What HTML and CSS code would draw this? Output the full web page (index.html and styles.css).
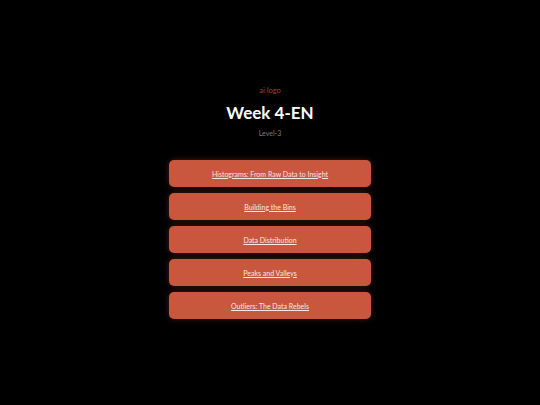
FILE: index.html
```
<!DOCTYPE html>
<html>
<head>
<meta charset="utf-8">
<link rel="stylesheet" href="styles.css">
</head>
<body>
<main class="page">
  <div class="logo">ai logo</div>
  <h1 class="title">Week 4-EN</h1>
  <div class="level">Level-3</div>
  <nav class="list">
    <a class="item" href="#">Histograms: From Raw Data to Insight</a>
    <a class="item" href="#">Building the Bins</a>
    <a class="item" href="#">Data Distribution</a>
    <a class="item" href="#">Peaks and Valleys</a>
    <a class="item" href="#">Outliers: The Data Rebels</a>
  </nav>
</main>
</body>
</html>
```
FILE: styles.css
```
html, body {
  margin: 0;
  padding: 0;
  background: #000;
  height: 100%;
}
body {
  font-family: Lato, "Noto Sans", sans-serif;
}
.page {
  display: flex;
  flex-direction: column;
  align-items: center;
  padding-top: 86px;
}
.logo {
  font-size: 7.5px;
  line-height: 10px;
  color: #a4452e;
}
.title {
  margin: 7px 0 0;
  font-size: 17px;
  line-height: 20px;
  font-weight: 700;
  color: #fff;
}
.level {
  margin-top: 5px;
  font-size: 7px;
  line-height: 10px;
  color: #7a7a7a;
}
.list {
  margin-top: 22px;
  display: flex;
  flex-direction: column;
  gap: 6px;
  width: 202px;
}
.item {
  display: flex;
  align-items: center;
  justify-content: center;
  height: 27px;
  border-radius: 5px;
  background: #c8573e;
  box-shadow: 0 0 6px rgba(200, 87, 62, 0.35);
  color: #f4e9e6;
  font-size: 7px;
  text-decoration: underline;
}
```
